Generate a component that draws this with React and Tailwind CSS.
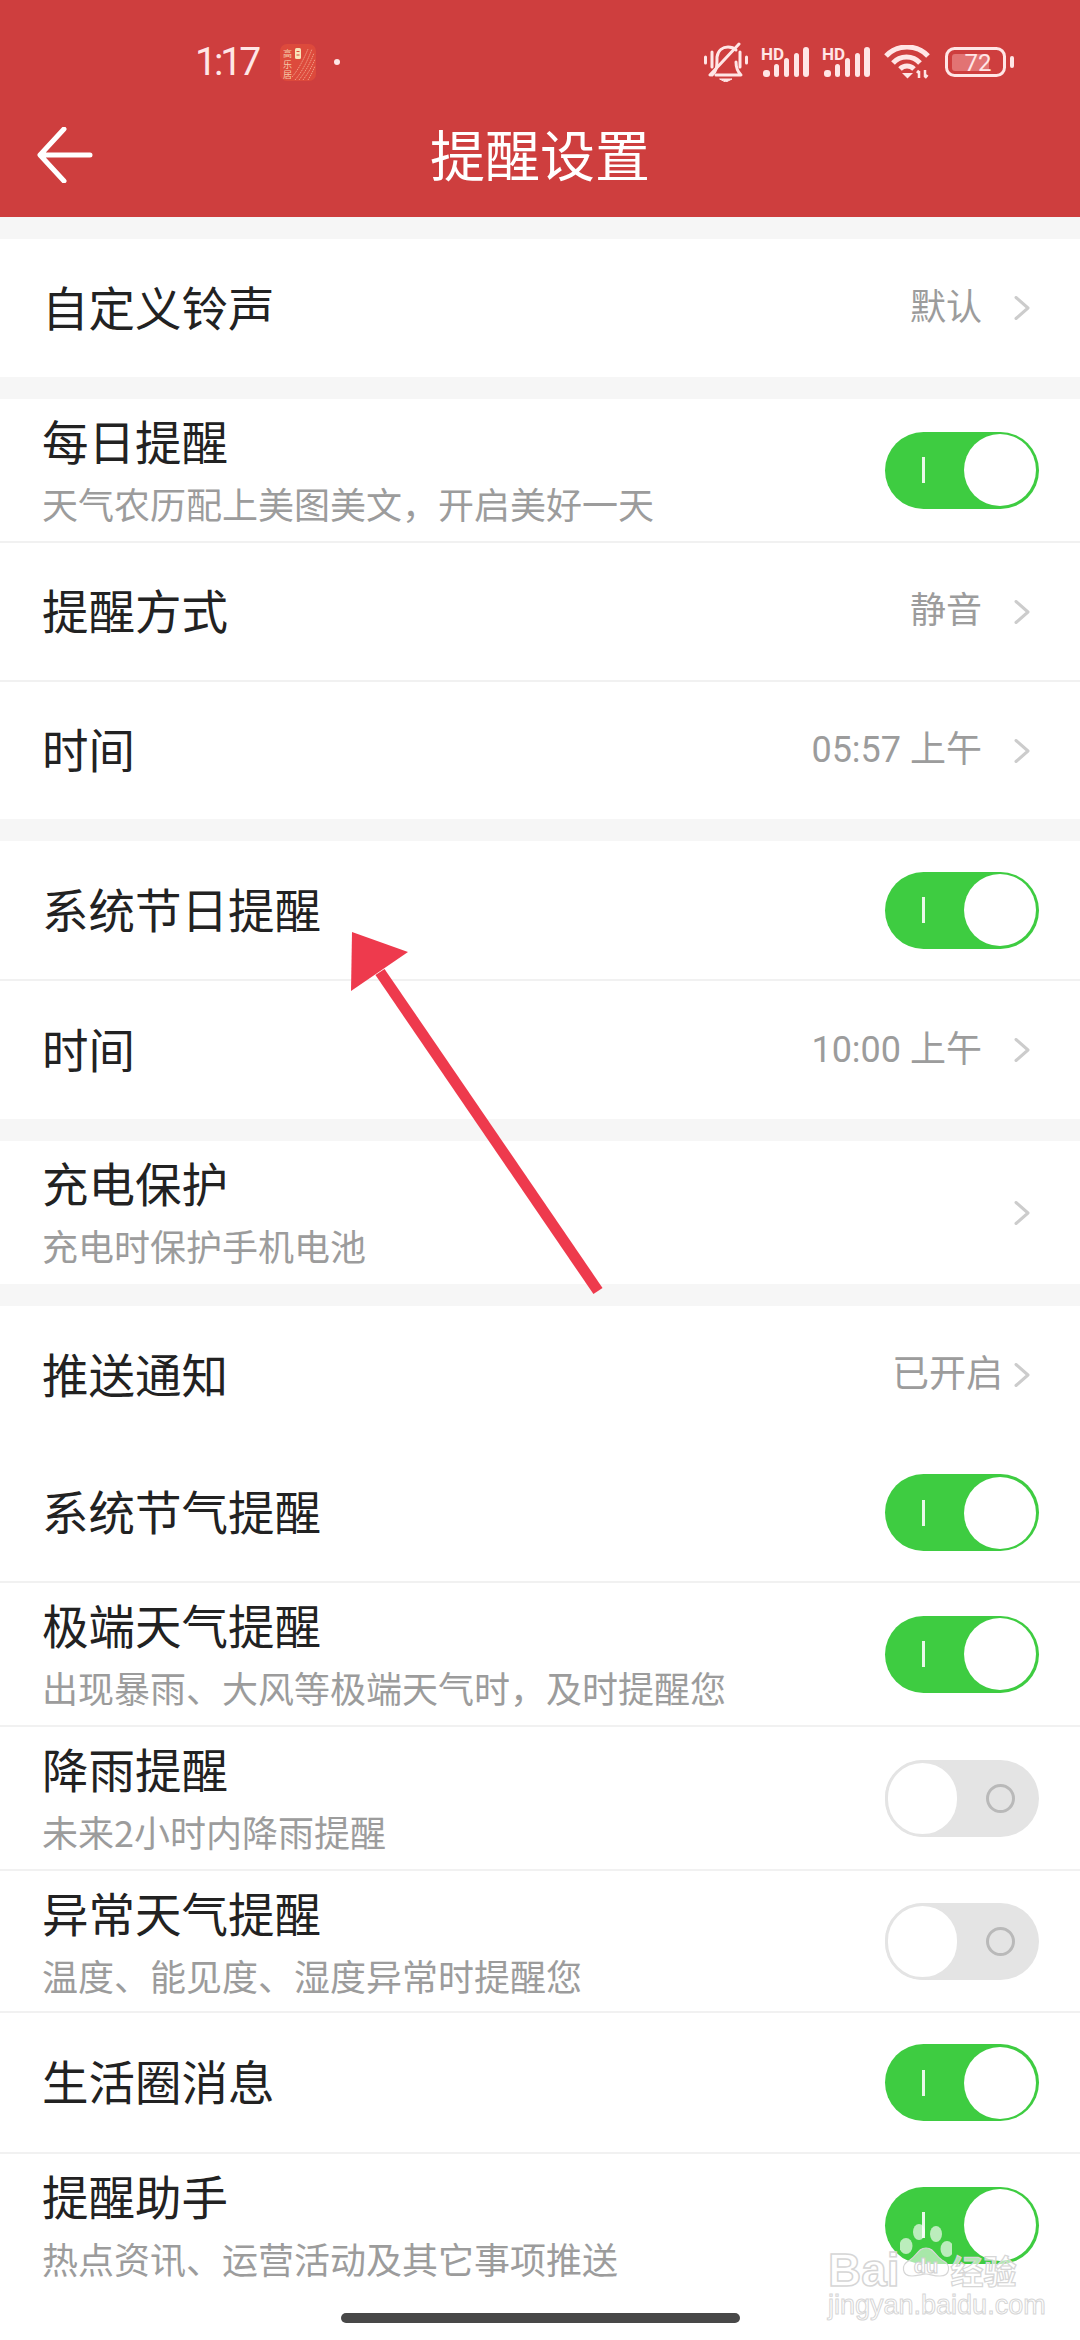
const FONT = "font-['Noto_Sans_CJK_SC','Noto_Sans',sans-serif]";

function Toggle({ on }) {
  if (on) {
    return (
      <div className="flex h-[77px] w-[154px] shrink-0 items-center justify-between rounded-full bg-[#3ecc41] pl-[37px] pr-[3px]">
        <span className="h-[26px] w-[3px] bg-[#e9f9e9]" />
        <span className="h-[72px] w-[72px] rounded-full bg-white" />
      </div>
    );
  }
  return (
    <div className="flex h-[77px] w-[154px] shrink-0 items-center rounded-full bg-[#e4e4e4]">
      <span className="h-[77px] w-[75px] rounded-full border-[3px] border-[#e4e4e4] bg-white" />
      <span className="ml-[26px] h-[29px] w-[29px] rounded-full border-[3px] border-[#b9b9b9]" />
    </div>
  );
}

function Chevron() {
  return (
    <svg width="16" height="24" viewBox="0 0 16 24" className="shrink-0" fill="none">
      <path d="M2 1.5 L14 12 L2 22.5" stroke="#cccccc" strokeWidth="3" strokeLinecap="round" strokeLinejoin="round" />
    </svg>
  );
}

function Row({ height, title, sub, value, valueClass = "mr-[32px] text-[36px]", chevron, toggle, divider }) {
  return (
    <div className={`flex w-full items-center bg-white pl-[42px] ${height} ${divider ? "border-b-2 border-[#f1f1f1]" : ""} ${toggle === undefined ? "pr-[50px]" : "pr-[41px]"}`}>
      {sub ? (
        <div className="flex-1 self-start pt-[12px]">
          <div className="h-[58px] text-[46.5px] leading-[58px] text-[#222222]">{title}</div>
          <div className="h-[68px] text-[36px] leading-[68px] text-[#9c9c9c]">{sub}</div>
        </div>
      ) : (
        <div className="flex-1 pb-[5px] text-[46.5px] leading-[58px] text-[#222222]">{title}</div>
      )}
      {value && <span className={`pb-[1px] font-['Roboto','Noto_Sans_CJK_SC',sans-serif] leading-[50px] text-[#9c9c9c] ${valueClass}`}>{value}</span>}
      {chevron && <Chevron />}
      {toggle !== undefined && <Toggle on={toggle} />}
    </div>
  );
}

function BellOff() {
  return (
    <svg width="44" height="40" viewBox="0 0 44 40" fill="none" stroke="#ffe6e6" strokeLinecap="round" strokeLinejoin="round" strokeWidth="3">
      <path d="M1.5 15 V21 M42.5 15 V21 M8 10 V25 M36 10 V25" />
      <path d="M8 33 C13 29 13 25 13 15 C14 8 19 5 24 5 C27 5 30 6 32 8" />
      <path d="M32 20 C32 26 33 29 37 33 L12 33" />
      <path d="M6 33 L35 2" />
      <path d="M16 37 H28 L22 40 Z" fill="#ffe6e6" strokeWidth="1" />
    </svg>
  );
}

function Signal() {
  return (
    <svg width="50" height="31" viewBox="0 0 50 31" fill="#ffe6e6" overflow="visible">
      <text x="1" y="13" fontFamily="Roboto, sans-serif" fontWeight="700" fontSize="17">HD</text>
      <rect x="3" y="23" width="7" height="7" rx="3" />
      <rect x="14" y="17" width="5" height="13" rx="2.5" />
      <rect x="24" y="11" width="5" height="19" rx="2.5" />
      <rect x="34" y="6" width="5" height="24" rx="2.5" />
      <rect x="43" y="0" width="6" height="30" rx="3" />
    </svg>
  );
}

function Wifi() {
  return (
    <svg width="46" height="34" viewBox="0 0 46 34" fill="none" stroke="#ffe6e6" strokeWidth="5">
      <path d="M2 11 C13 -1 33 -1 44 11" />
      <path d="M9 18 C16 10 29 10 36 18" />
      <path d="M16 24 C20 20 26 20 30 24" />
      <path d="M18 28 L29 28 L23.5 33.5 Z" fill="#ffe6e6" stroke="none" />
      <path d="M35 33 V26 M33 28 L35 25.5 M41 25 V32 M41 33 L43.5 30" strokeWidth="2.5" />
    </svg>
  );
}

function Battery() {
  return (
    <svg width="70" height="30" viewBox="0 0 70 30" fill="none">
      <rect x="1.5" y="1.5" width="58" height="27" rx="8" stroke="#ffe6e6" strokeWidth="3" />
      <rect x="7" y="7" width="37" height="17" rx="3" fill="#e27373" />
      <rect x="65" y="9" width="4" height="12" rx="2" fill="#ffe6e6" />
      <text x="33" y="24" textAnchor="middle" fontFamily="Roboto, sans-serif" fontSize="24" fill="#ffe6e6">72</text>
    </svg>
  );
}

function AppIcon() {
  return (
    <svg width="36" height="37" viewBox="0 0 36 37" fill="none">
      <rect width="36" height="37" rx="7" fill="#dd4a3c" />
      <text x="3" y="13" fontSize="9" fill="#f6c9a8" fontFamily="'Noto Sans CJK SC', sans-serif">高</text>
      <text x="3" y="24" fontSize="9" fill="#f6c9a8" fontFamily="'Noto Sans CJK SC', sans-serif">乐</text>
      <text x="3" y="34" fontSize="9" fill="#f6c9a8" fontFamily="'Noto Sans CJK SC', sans-serif">居</text>
      <rect x="15" y="4" width="6" height="11" rx="1.5" fill="#f8e3b8" />
      <path d="M16.5 7.5 H19.5 M16.5 11 H19.5" stroke="#dd4a3c" strokeWidth="1" />
      <g stroke="#f2a58c" strokeWidth="0.9" strokeDasharray="1.4 0.8">
        <path d="M15 36 C22 28 27 18 32 5" />
        <path d="M19 36 C25 28 30 20 34 9" />
        <path d="M23 36 C28 29 32 23 35 15" />
        <path d="M28 36 C31 31 33 27 35 22" />
        <path d="M12 33 C18 26 23 17 28 5" />
      </g>
    </svg>
  );
}

function Watermark() {
  return (
    <div className="pointer-events-none absolute left-[828px] top-[2250px] flex h-[68px] w-[196px] flex-col font-['Liberation_Sans',sans-serif]">
      <div className="flex h-[42px] items-end">
        <span className="text-[46px] font-bold leading-[40px] text-white/60 [-webkit-text-stroke:1.5px_#d6d6d6]">Bai</span>
        <svg width="52" height="66" viewBox="0 0 52 66" className="-mt-[30px] shrink-0" fill="none">
          <ellipse cx="19" cy="8" rx="6" ry="8" fill="#ffffff" fillOpacity="0.65" />
          <ellipse cx="36" cy="10" rx="6" ry="8" fill="#ffffff" fillOpacity="0.65" />
          <ellipse cx="6" cy="22" rx="6.5" ry="8" fill="#ffffff" fillOpacity="0.65" />
          <ellipse cx="47" cy="25" rx="6.5" ry="8" fill="#ffffff" fillOpacity="0.65" />
          <path d="M26 24 C34 24 35 32 42 36 C52 41 50 52 40 52 C33 52 30 50 26 50 C22 50 18 52 12 52 C2 52 0 41 10 36 C17 32 18 24 26 24 Z" fill="#ffffff" fillOpacity="0.55" stroke="#d6d6d6" strokeWidth="1.2" />
          <text x="26" y="49" textAnchor="middle" fontFamily="'Liberation Sans', sans-serif" fontWeight="700" fontSize="20" fill="#ffffff" stroke="#d0d0d0" strokeWidth="1">du</text>
        </svg>
        <span className="-ml-[1px] font-['Noto_Sans_CJK_SC',sans-serif] text-[33px] font-bold leading-[40px] text-white/60 [-webkit-text-stroke:1.2px_#d6d6d6]">经验</span>
      </div>
      <div className="mt-[2px] whitespace-nowrap text-[27px] leading-[26px] text-white/60 [-webkit-text-stroke:1px_#d6d6d6]">jingyan.baidu.com</div>
    </div>
  );
}

export default function App() {
  return (
    <div className={`relative h-[2340px] w-[1080px] overflow-hidden bg-[#f6f6f6] ${FONT}`}>
      <header className="h-[217px] bg-[#ce3e3e]">
        <div className="flex h-[124px] items-center pl-[195px] pr-[65px]">
          <span className="font-['Roboto',sans-serif] text-[39px] leading-none tracking-[-3px] text-[#ffe6e6]">1:17</span>
          <span className="ml-[22px]"><AppIcon /></span>
          <span className="ml-[18px] h-[6px] w-[6px] rounded-full bg-[#ffe6e6]" />
          <div className="ml-auto flex items-center">
            <BellOff />
            <span className="ml-[12px]"><Signal /></span>
            <span className="ml-[11px]"><Signal /></span>
            <span className="ml-[13px]"><Wifi /></span>
            <span className="ml-[15px]"><Battery /></span>
          </div>
        </div>
        <div className="grid h-[56px] grid-cols-[1fr_auto_1fr] items-center">
          <svg width="56" height="56" viewBox="0 0 56 56" fill="none" className="ml-[37px]">
            <path d="M53 28 H4 M27 2 L3 28 L27 54" stroke="#ffffff" strokeWidth="5" strokeLinecap="round" strokeLinejoin="round" />
          </svg>
          <h1 className="pb-[5px] text-[55px] font-normal leading-[56px] text-white">提醒设置</h1>
          <span />
        </div>
      </header>

      <section className="mt-[22px]">
        <Row height="h-[138px]" title="自定义铃声" value="默认" chevron />
      </section>

      <section className="mt-[22px]">
        <Row height="h-[144px]" title="每日提醒" sub="天气农历配上美图美文，开启美好一天" toggle={true} divider />
        <Row height="h-[139px]" title="提醒方式" value="静音" chevron divider />
        <Row height="h-[137px]" title="时间" value="05:57 上午" chevron />
      </section>

      <section className="mt-[22px]">
        <Row height="h-[140px]" title="系统节日提醒" toggle={true} divider />
        <Row height="h-[138px]" title="时间" value="10:00 上午" chevron />
      </section>

      <section className="mt-[22px]">
        <Row height="h-[143px]" title="充电保护" sub="充电时保护手机电池" chevron />
      </section>

      <section className="mt-[22px] bg-white pb-[17px]">
        <Row height="h-[138px]" title="推送通知" value="已开启" valueClass="mr-[11px] text-[37px]" chevron />
        <Row height="h-[139px]" title="系统节气提醒" toggle={true} divider />
        <Row height="h-[144px]" title="极端天气提醒" sub="出现暴雨、大风等极端天气时，及时提醒您" toggle={true} divider />
        <Row height="h-[144px]" title="降雨提醒" sub="未来2小时内降雨提醒" toggle={false} divider />
        <Row height="h-[142px]" title="异常天气提醒" sub="温度、能见度、湿度异常时提醒您" toggle={false} divider />
        <Row height="h-[141px]" title="生活圈消息" toggle={true} divider />
        <Row height="h-[142px]" title="提醒助手" sub="热点资讯、运营活动及其它事项推送" toggle={true} />
        <div className="flex justify-center pt-[17px]">
          <span className="h-[10px] w-[399px] rounded-full bg-[#484848]" />
        </div>
      </section>

      <svg width="270" height="380" viewBox="0 0 270 380" className="absolute left-[340px] top-[920px]" fill="none">
        <line x1="40" y1="52" x2="258" y2="371" stroke="#ee3a4d" strokeWidth="11" />
        <polygon points="12,12 68,32 11,71" fill="#ee3a4d" />
      </svg>

      <Watermark />
    </div>
  );
}
